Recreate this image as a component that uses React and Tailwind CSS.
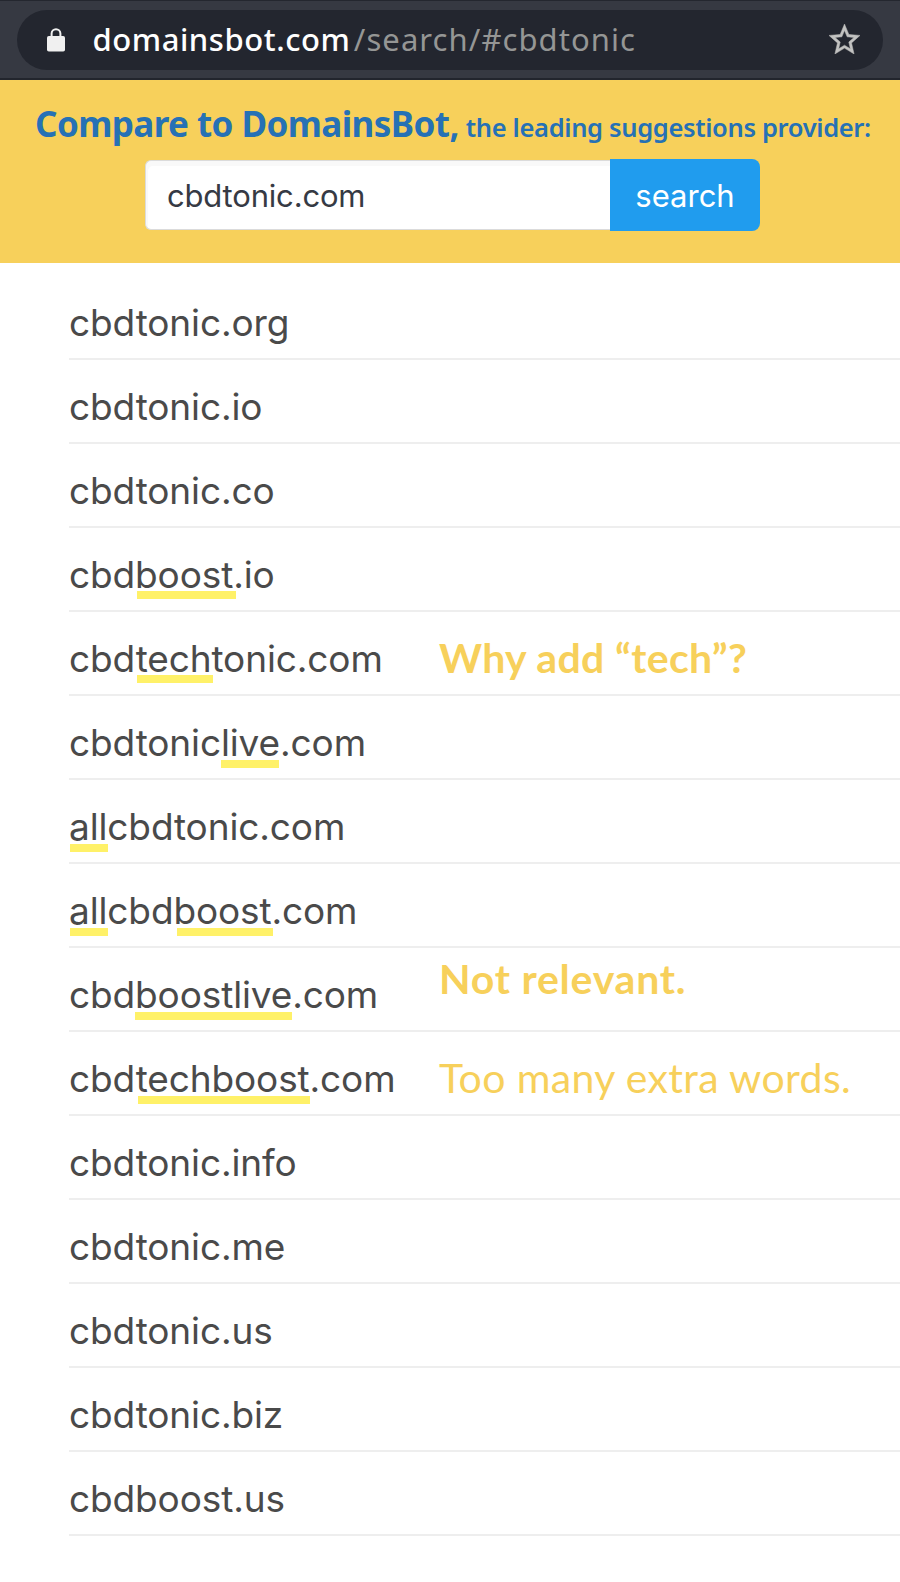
const DOMAINS = [
  { name: "cbdtonic.org" },
  { name: "cbdtonic.io" },
  { name: "cbdtonic.co" },
  { name: "cbdboost.io", bars: ["left-[68px] w-[99px] top-[63px]"] },
  {
    name: "cbdtechtonic.com",
    bars: ["left-[68px] w-[76px] top-[63px]"],
    note: { text: "Why add “tech”?", style: "left-[370px] top-[21px] font-bold tracking-[0.35px]" },
  },
  { name: "cbdtoniclive.com", bars: ["left-[152px] w-[58px] top-[64px]"] },
  { name: "allcbdtonic.com", bars: ["left-[1px] w-[38px] top-[64px]"] },
  { name: "allcbdboost.com", bars: ["left-[1px] w-[38px] top-[64px]", "left-[108px] w-[96px] top-[64px]"] },
  {
    name: "cbdboostlive.com",
    bars: ["left-[66px] w-[157px] top-[64px]"],
    note: { text: "Not relevant.", style: "left-[370px] top-[6px] font-bold tracking-[0.78px]" },
  },
  {
    name: "cbdtechboost.com",
    bars: ["left-[69px] w-[172px] top-[64px]"],
    note: { text: "Too many extra words.", style: "left-[370px] top-[21px] font-normal tracking-[0.38px]" },
  },
  { name: "cbdtonic.info" },
  { name: "cbdtonic.me" },
  { name: "cbdtonic.us" },
  { name: "cbdtonic.biz" },
  { name: "cbdboost.us" },
];

function LockIcon() {
  return (
    <svg viewBox="0 0 18 24" className="h-[24px] w-[18px]" fill="none">
      <rect x="0" y="8" width="18" height="15.5" rx="1.8" fill="#f0f0f0" />
      <path d="M4.6 9V5.6a4.4 4.4 0 0 1 8.8 0V9" stroke="#f0f0f0" strokeWidth="2" />
    </svg>
  );
}

function StarIcon() {
  return (
    <svg viewBox="2 2 20 19" className="-mt-[2px] h-[30px] w-[31px]" fill="#c2c2c1" stroke="#c2c2c1" strokeWidth="0.3" preserveAspectRatio="none">
      <path d="M22 9.24l-7.19-.62L12 2 9.19 8.63 2 9.24l5.46 4.73L5.82 21 12 17.27 18.18 21l-1.63-7.03L22 9.24zM12 15.4l-3.76 2.27 1-4.28-3.32-2.88 4.38-.38L12 6.1l1.71 4.04 4.38.38-3.32 2.88 1 4.28L12 15.4z" />
    </svg>
  );
}

function AddressBar() {
  return (
    <header className="h-[80px] border-t border-b-2 border-t-[#24272f] border-b-[#22252d] bg-[#363942] pt-[9px] pr-[17px] pl-[17px]">
      <div className="flex h-[60px] items-center rounded-full bg-[#23262f] pr-[23px] pl-[30px]">
        <LockIcon />
        <div className="ml-[27.5px] flex-1 whitespace-nowrap pb-[2px] font-['Noto_Sans',sans-serif] text-[31px] leading-[58px]">
          <span className="font-medium tracking-[0.55px] text-white">domainsbot.com</span>
          <span className="ml-[3.5px] tracking-[1.07px] text-[#959695]">/search/#cbdtonic</span>
        </div>
        <StarIcon />
      </div>
    </header>
  );
}

function SearchBanner() {
  return (
    <section className="h-[183px] bg-[#f7d05b] pt-[24px]">
      <h1 className="flex h-[40px] items-baseline whitespace-nowrap pl-[35px] font-['Noto_Sans',sans-serif] leading-[40px] text-[#2671b5]">
        <span className="text-[35px] font-bold tracking-[-0.57px]">Compare to DomainsBot,</span>
        <span className="ml-[7px] text-[25.5px] font-semibold tracking-[-0.34px]">the leading suggestions provider:</span>
      </h1>
      <form className="mt-[15px] ml-[145px] flex items-center font-['Inter',sans-serif] text-[31px]">
        <div className="h-[70px] w-[465px] rounded-l-[6px] border border-r-0 border-[#dbdbdb] bg-white pl-[21px] leading-[70px] tracking-[-0.18px] text-[#363a44] shadow-[inset_2px_5px_0_#f9f9f9]">
          cbdtonic.com
        </div>
        <button type="button" className="h-[72px] w-[150px] rounded-r-[8px] bg-[#209cee] pt-[2px] text-center leading-[70px] text-white">
          search
        </button>
      </form>
    </section>
  );
}

function DomainRow({ name, bars = [], note }) {
  return (
    <li className="relative h-[84px] border-b-2 border-[#eeeeee] pt-[11px] text-[37px] leading-[71px] tracking-[-0.12px]">
      {bars.map((bar) => (
        <span key={bar} className={`absolute h-[8px] bg-[#fff168] ${bar}`} />
      ))}
      <span className="relative">{name}</span>
      {note && (
        <span className={`absolute whitespace-nowrap font-['Lato',sans-serif] text-[41px] leading-[50px] text-[#f7d05b] ${note.style}`}>
          {note.text}
        </span>
      )}
    </li>
  );
}

export default function App() {
  return (
    <div className="min-h-[1582px] w-[900px] overflow-hidden bg-white">
      <AddressBar />
      <SearchBanner />
      <ul className="mt-[13px] ml-[69px] font-['Inter',sans-serif] text-[#4a4a4a]">
        {DOMAINS.map((d) => (
          <DomainRow key={d.name} {...d} />
        ))}
      </ul>
    </div>
  );
}
